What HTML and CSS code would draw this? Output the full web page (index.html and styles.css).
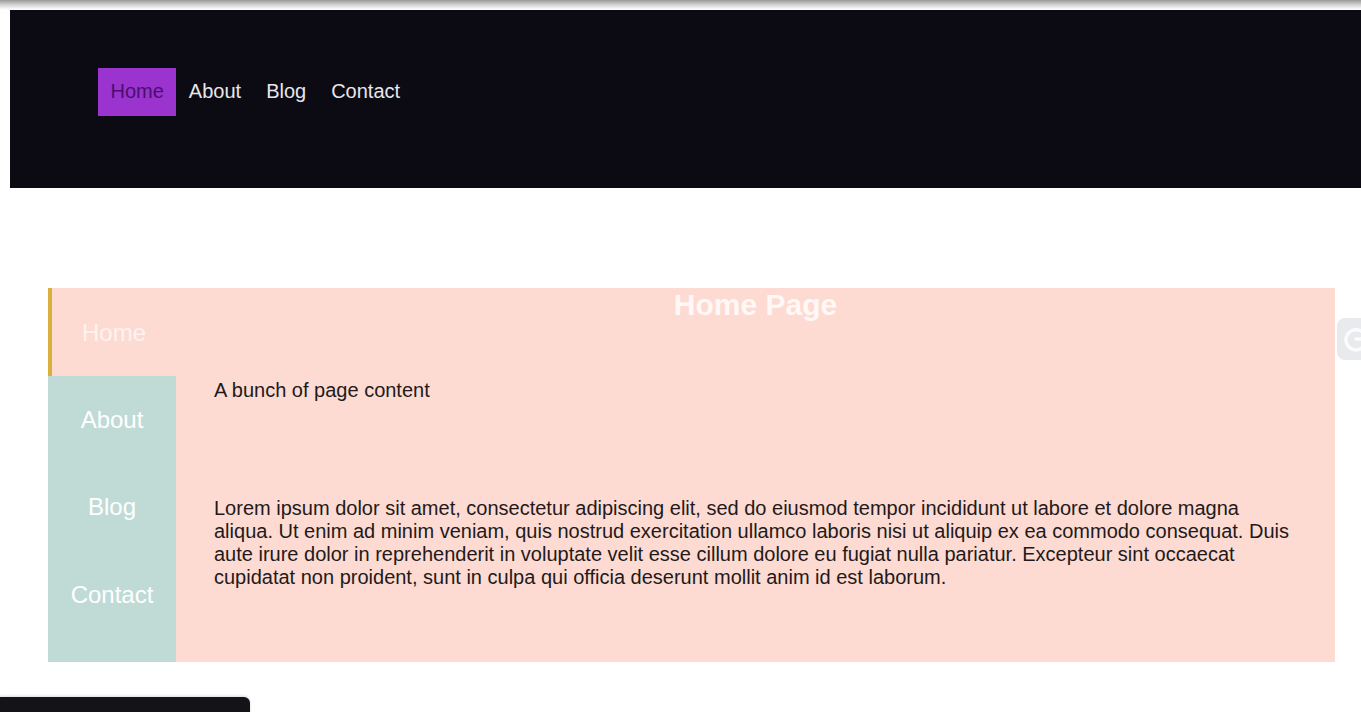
FILE: index.html
```html
<!DOCTYPE html>
<html lang="en">
<head>
<meta charset="utf-8">
<title>Home Page</title>
<link rel="stylesheet" href="styles.css">
</head>
<body>
<div class="topshade"></div>
<header class="header">
  <nav class="topnav">
    <a class="topnav-link active" href="#">Home</a>
    <a class="topnav-link" href="#">About</a>
    <a class="topnav-link" href="#">Blog</a>
    <a class="topnav-link" href="#">Contact</a>
  </nav>
</header>
<main class="tabs">
  <aside class="sidebar">
    <a class="side-link active" href="#">Home</a>
    <a class="side-link" href="#">About</a>
    <a class="side-link" href="#">Blog</a>
    <a class="side-link" href="#">Contact</a>
  </aside>
  <section class="content">
    <h1 class="title">Home Page</h1>
    <p class="intro">A bunch of page content</p>
    <p class="lorem">Lorem ipsum dolor sit amet, consectetur adipiscing elit, sed do eiusmod tempor incididunt ut labore et dolore magna aliqua. Ut enim ad minim veniam, quis nostrud exercitation ullamco laboris nisi ut aliquip ex ea commodo consequat. Duis aute irure dolor in reprehenderit in voluptate velit esse cillum dolore eu fugiat nulla pariatur. Excepteur sint occaecat cupidatat non proident, sunt in culpa qui officia deserunt mollit anim id est laborum.</p>
  </section>
</main>
<div class="side-widget">
  <svg class="widget-icon" width="28" height="28" viewBox="0 0 28 28" aria-hidden="true">
    <path d="M22.5 9.5A10 10 0 1 0 24 14H14" fill="none" stroke="#fbfbfc" stroke-width="3.5" stroke-linecap="round"/>
  </svg>
</div>
<div class="bottom-bar"></div>
</body>
</html>
```

FILE: styles.css
```css
html, body {
  margin: 0;
  padding: 0;
  background: #ffffff;
  font-family: "Liberation Sans", Arial, sans-serif;
  overflow: hidden;
}

.topshade {
  height: 10px;
  background: linear-gradient(to bottom, #9a9a9a 0%, #cfcfcf 45%, #f6f6f6 85%, #ffffff 100%);
}

.header {
  margin-left: 10px;
  background: #0c0b14;
  height: 178px;
  box-sizing: border-box;
  padding: 58px 0 0 88px;
}

.topnav {
  display: flex;
}

.topnav-link {
  display: block;
  font-size: 20px;
  line-height: 23px;
  padding: 12px 12.5px 13px;
  color: #e8e6ea;
  text-decoration: none;
}

.topnav-link.active {
  background: #9b33cf;
  color: #4a0f6e;
}

.tabs {
  display: flex;
  margin: 100px 26px 0 48px;
  background: #fddbd2;
}

.sidebar {
  width: 128px;
  flex: none;
  display: flex;
  flex-direction: column;
  background: #c0dbd5;
}

.side-link {
  display: block;
  padding: 30px 0;
  font-size: 24px;
  line-height: 27.5px;
  text-align: center;
  color: #ffffff;
  text-decoration: none;
}

.side-link.active {
  padding: 31px 0 29px;
  background: #fddbd2;
  border-left: 4px solid #d9b03e;
  color: #fdf3f0;
}

.content {
  flex: 1;
  padding: 0 38px 73px;
  color: #221a1a;
}

.title {
  margin: 0;
  font-size: 30px;
  line-height: 33px;
  font-weight: bold;
  text-align: center;
  color: #fff8f6;
}

.intro {
  margin: 58px 0 0;
  font-size: 20px;
  line-height: 23px;
}

.lorem {
  margin: 95px 0 0;
  font-size: 20px;
  line-height: 23px;
}

.side-widget {
  position: absolute;
  top: 318px;
  left: 1337px;
  width: 40px;
  height: 42px;
  border-radius: 8px 0 0 8px;
  background: #e8eaee;
  display: flex;
  align-items: center;
  padding-left: 5px;
  box-sizing: border-box;
}

.bottom-bar {
  position: absolute;
  left: 0;
  top: 697px;
  width: 250px;
  height: 30px;
  background: #141418;
  border-radius: 0 6px 0 0;
  box-shadow: 0 -1px 3px rgba(0, 0, 0, 0.15);
}
```
